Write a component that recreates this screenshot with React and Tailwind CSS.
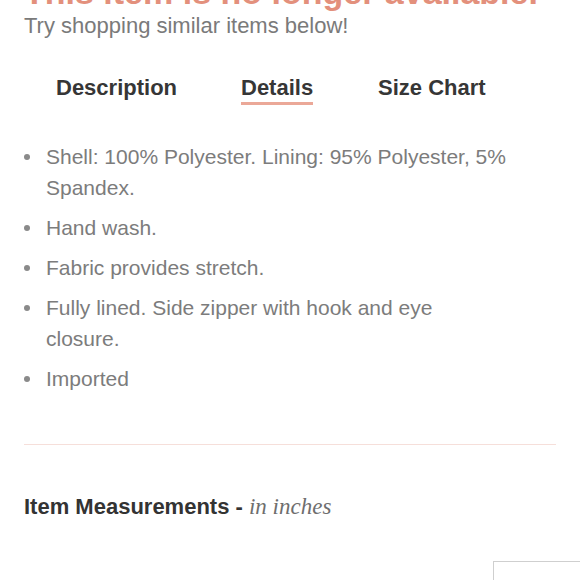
export default function App() {
  const details = [
    'Shell: 100% Polyester. Lining: 95% Polyester, 5% Spandex.',
    'Hand wash.',
    'Fabric provides stretch.',
    'Fully lined. Side zipper with hook and eye closure.',
    'Imported',
  ];

  const tabs = [
    { label: 'Description', w: 'w-[185px]', active: false },
    { label: 'Details', w: 'w-[137px]', active: true },
    { label: 'Size Chart', w: '', active: false },
  ];

  return (
    <div className="h-[580px] w-[580px] overflow-hidden bg-white font-['Liberation_Sans',sans-serif]">
      <div className="px-6">
        <h1 className="-mt-[27px] whitespace-nowrap text-[34px] font-semibold leading-[38px] text-[#e3907c]">
          This item is no longer available.
        </h1>
        <p className="mt-[1px] text-[22px] leading-[28px] text-[#7a7a7a]">
          Try shopping similar items below!
        </p>

        <nav className="mt-[34px] flex items-start pl-8 text-[22px] font-bold leading-[28px] text-[#363636]">
          {tabs.map((t) => (
            <button key={t.label} type="button" className={`${t.w} text-left`}>
              <span
                className={`block w-fit border-b-[3px] ${
                  t.active ? 'border-[#eba898]' : 'border-transparent'
                }`}
              >
                {t.label}
              </span>
            </button>
          ))}
        </nav>

        <ul className="mt-[36px] flex w-[484px] flex-col gap-[9px] text-[21px] leading-[31px] text-[#7c7c7c]">
          {details.map((d) => (
            <li key={d} className="flex">
              <span className="mt-[13px] mr-[16px] h-[6px] w-[6px] shrink-0 rounded-full bg-[#8a8a8a]" />
              <span>{d}</span>
            </li>
          ))}
        </ul>

        <div className="mt-[50px] h-px w-[532px] bg-[#f6dfda]" />

        <h2 className="mt-[48px] text-[22px] font-bold leading-[28px] text-[#333]">
          Item Measurements -{' '}
          <span className="font-['Liberation_Serif',serif] text-[23px] font-normal italic text-[#6e6e6e]">
            in inches
          </span>
        </h2>
      </div>

      <div className="mt-[40px] flex justify-end">
        <div className="h-[40px] w-[87px] border-l border-t border-[#cfcfcf]" />
      </div>
    </div>
  );
}
